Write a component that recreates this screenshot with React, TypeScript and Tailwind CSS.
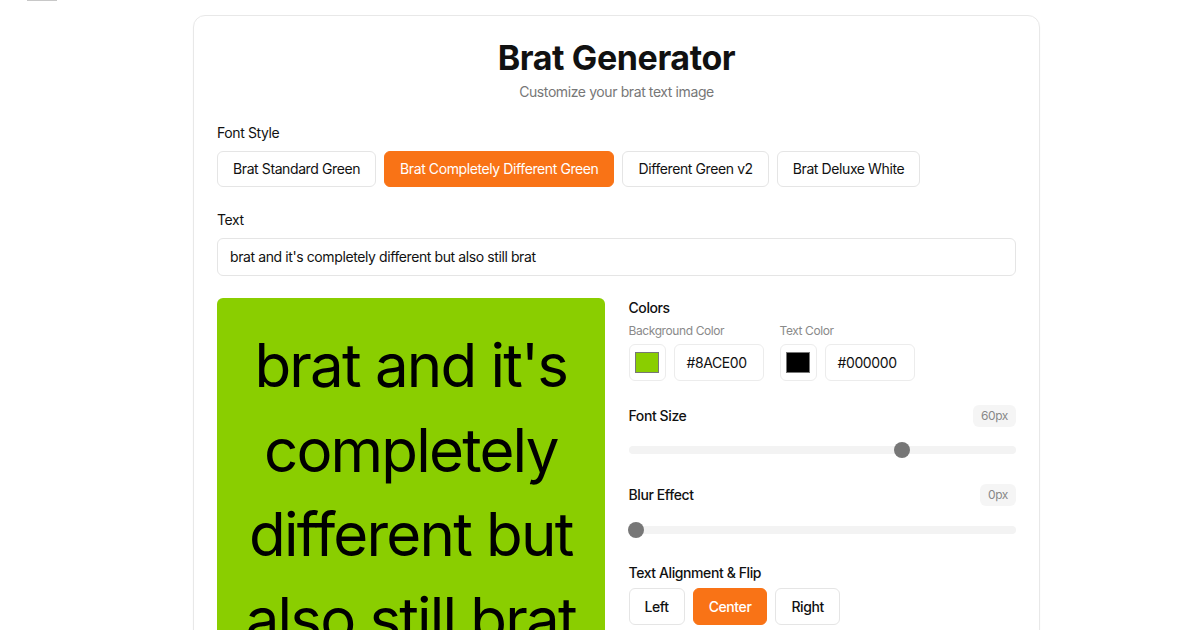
import React, { useState } from 'react'

const fontStyles = [
  'Brat Standard Green',
  'Brat Completely Different Green',
  'Different Green v2',
  'Brat Deluxe White',
]

function Slider({ value, max }: { value: number; max: number }) {
  const pct = value / max
  return (
    <div className="relative h-4 flex items-center">
      <div className="w-full h-2 rounded-full bg-[#f3f3f3]" />
      <div
        className="absolute w-4 h-4 rounded-full bg-[#777777] -translate-x-1/2"
        style={{ left: `calc(7px + (100% - 14px) * ${pct})` }}
      />
    </div>
  )
}

function ColorField({ label, color, hex }: { label: string; color: string; hex: string }) {
  return (
    <div>
      <div className="text-xs leading-4 text-[#8a8a8a] mb-[5px]">{label}</div>
      <div className="flex gap-2">
        <div className="w-[37px] h-[37px] border border-[#ececec] rounded-md flex items-center justify-center">
          <div className="w-6 h-[21px] border border-[#777]" style={{ backgroundColor: color }} />
        </div>
        <div className="w-[90px] h-[37px] border border-[#ececec] rounded-md flex items-center px-3 text-sm text-[#111]">
          {hex}
        </div>
      </div>
    </div>
  )
}

export default function App() {
  const [style, setStyle] = useState(1)
  const [align, setAlign] = useState('Center')

  return (
    <div className="min-h-screen bg-white font-['Inter',sans-serif] tracking-[-0.025em] text-[#111] overflow-hidden h-[630px]">
      <div className="ml-[27px] w-[30px] h-px bg-[#c8c8c8]" />
      <div className="ml-[193px] mt-[14px] w-[847px] border border-[#e8e8e8] rounded-xl px-[23px] pt-[22px] pb-10 shadow-[0_1px_2px_rgba(0,0,0,0.03)]">
        <div className="text-center">
          <h1 className="text-[34px] leading-10 font-bold">Brat Generator</h1>
          <p className="mt-1 text-sm text-[#777]">Customize your brat text image</p>
        </div>

        <div className="mt-[21px] text-sm">Font Style</div>
        <div className="mt-2 flex gap-2">
          {fontStyles.map((s, i) => (
            <button
              key={s}
              onClick={() => setStyle(i)}
              className={
                i === style
                  ? 'h-9 px-[15px] rounded-md text-sm bg-[#f97316] text-white border border-[#f97316]'
                  : 'h-9 px-[15px] rounded-md text-sm bg-white border border-[#e5e5e5]'
              }
            >
              {s}
            </button>
          ))}
        </div>

        <div className="mt-[23px] text-sm">Text</div>
        <div className="mt-2 h-[38px] border border-[#e5e5e5] rounded-md flex items-center px-3 text-sm">
          brat and it's completely different but also still brat
        </div>

        <div className="mt-[22px] grid grid-cols-2 gap-6">
          <div className="h-[400px] bg-[#8ACE00] rounded-md pt-[25px] px-3 text-center text-black text-[60px] leading-[84.5px] tracking-[-0.03em] overflow-hidden">
            brat and it's completely different but also still brat
          </div>

          <div>
            <div className="text-sm leading-5 font-medium">Colors</div>
            <div className="mt-[5px] flex gap-4">
              <ColorField label="Background Color" color="#8ACE00" hex="#8ACE00" />
              <ColorField label="Text Color" color="#000000" hex="#000000" />
            </div>

            <div className="mt-6 flex items-center justify-between">
              <span className="text-sm font-medium">Font Size</span>
              <span className="text-xs text-[#888] bg-[#f5f5f5] rounded-md px-2 py-[3px]">60px</span>
            </div>
            <div className="mt-[15px]">
              <Slider value={60} max={84} />
            </div>

            <div className="mt-[26px] flex items-center justify-between">
              <span className="text-sm font-medium">Blur Effect</span>
              <span className="text-xs text-[#888] bg-[#f5f5f5] rounded-md px-2 py-[3px]">0px</span>
            </div>
            <div className="mt-4">
              <Slider value={0} max={10} />
            </div>

            <div className="mt-[25px] text-sm font-medium">Text Alignment &amp; Flip</div>
            <div className="mt-[5px] flex gap-2">
              {['Left', 'Center', 'Right'].map((a) => (
                <button
                  key={a}
                  onClick={() => setAlign(a)}
                  className={
                    a === align
                      ? 'h-[37px] px-[15px] rounded-md text-sm font-medium bg-[#f97316] text-white border border-[#f97316]'
                      : 'h-[37px] px-[15px] rounded-md text-sm font-medium bg-white border border-[#e5e5e5]'
                  }
                >
                  {a}
                </button>
              ))}
            </div>
          </div>
        </div>
      </div>
    </div>
  )
}
